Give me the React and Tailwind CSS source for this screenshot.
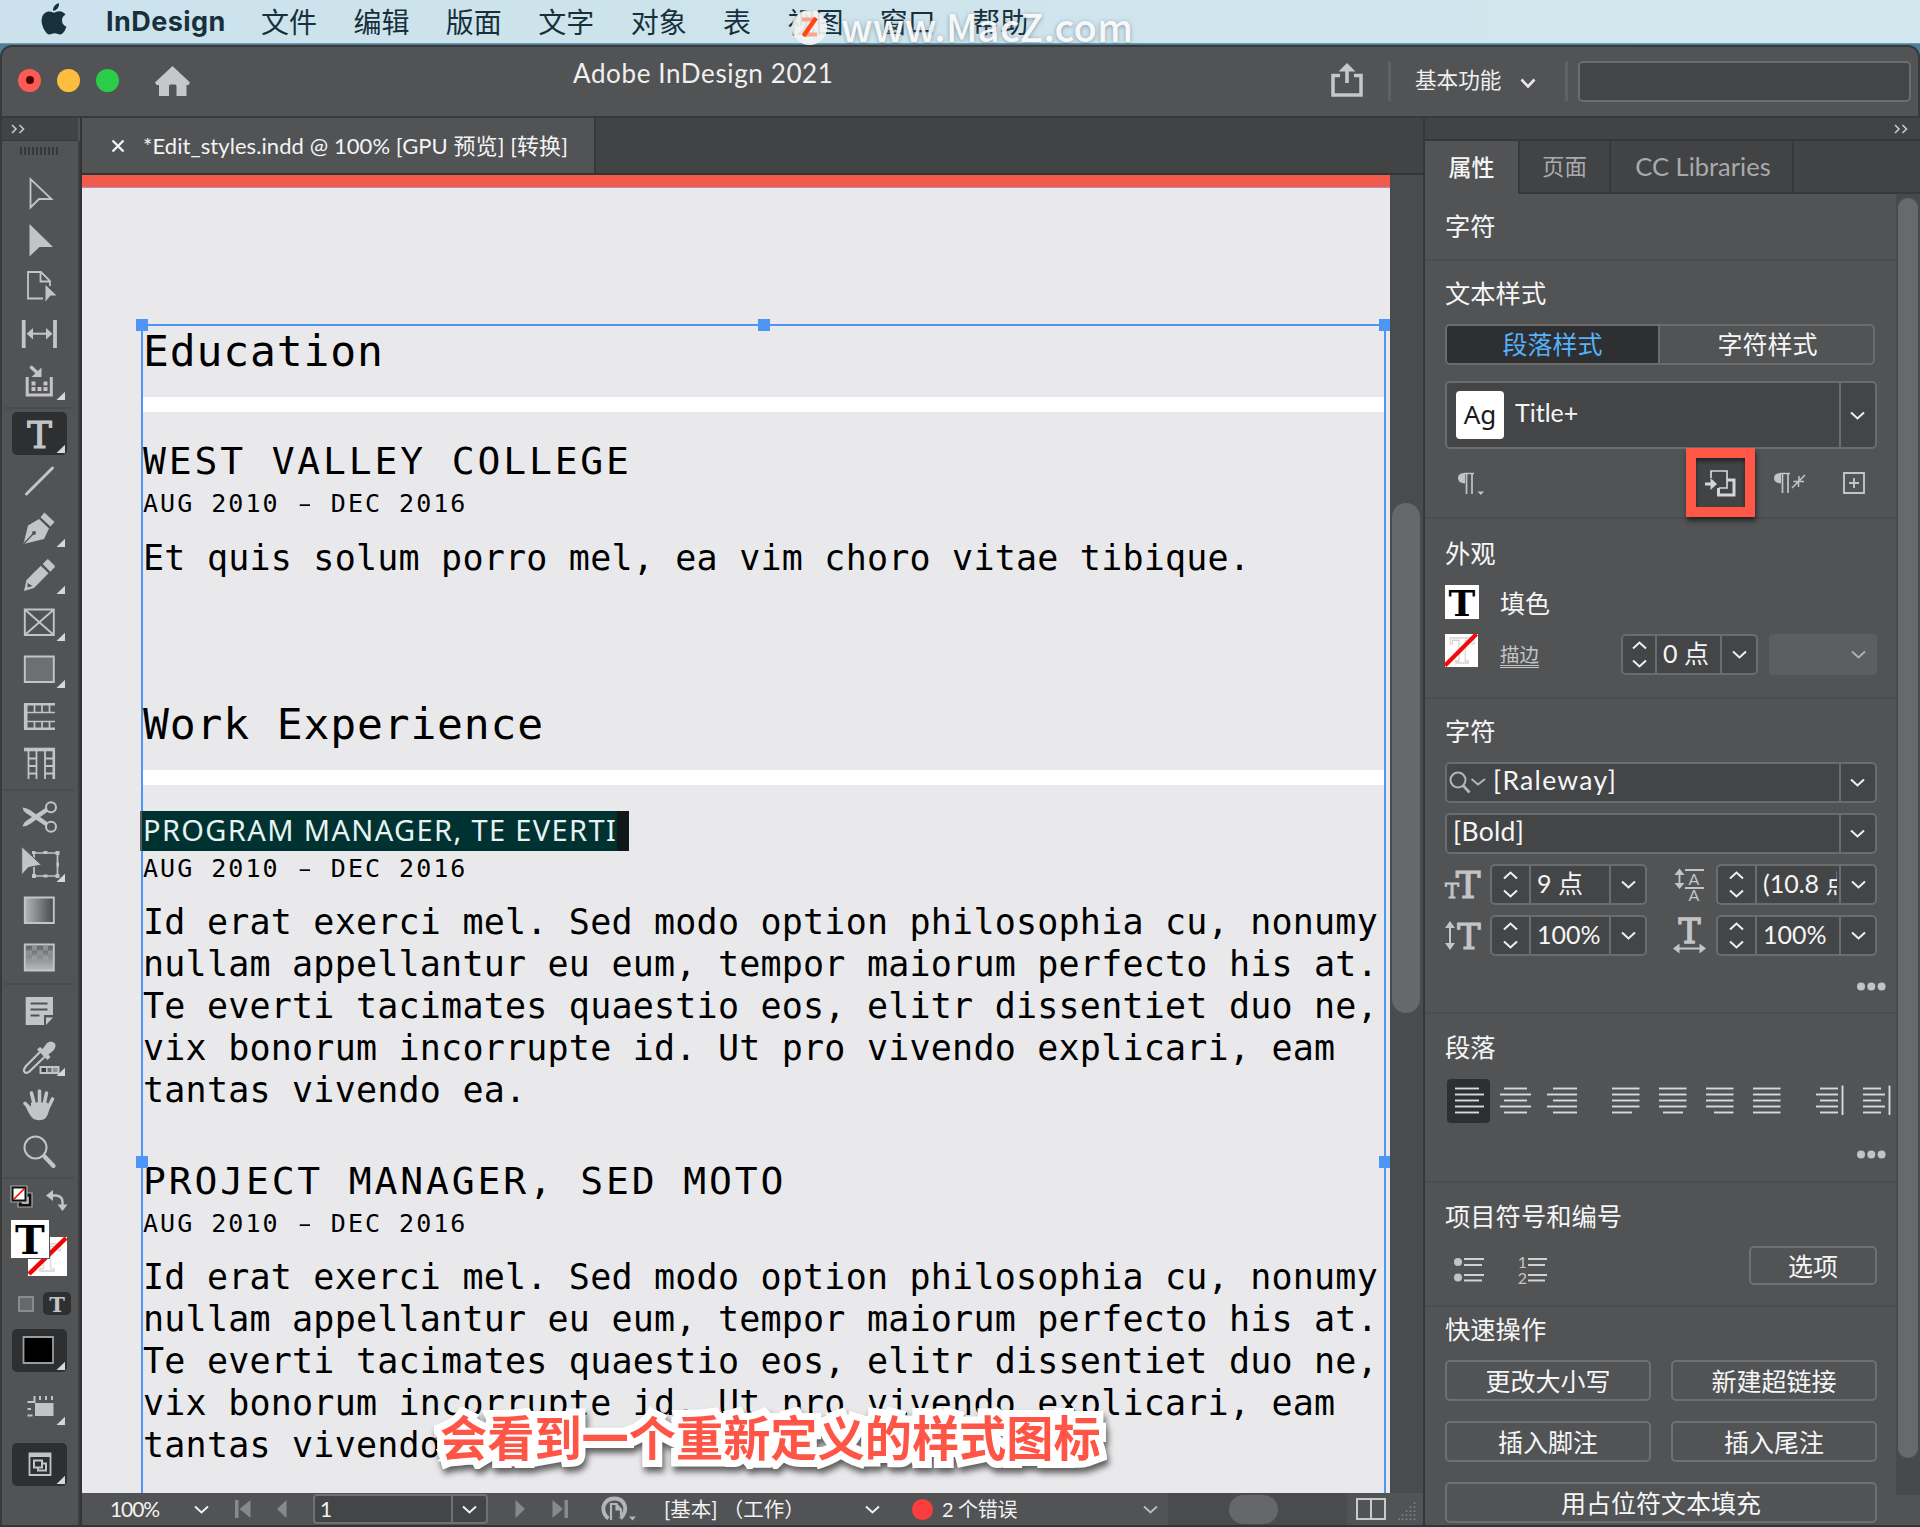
import React from 'react';

const ICON = '#c3c4c6';

const MENUS = ['文件', '编辑', '版面', '文字', '对象', '表', '视图', '窗口', '帮助'];

const BODY_LINES = [
  'Id erat exerci mel. Sed modo option philosophia cu, nonumy',
  'nullam appellantur eu eum, tempor maiorum perfecto his at.',
  'Te everti tacimates quaestio eos, elitr dissentiet duo ne,',
  'vix bonorum incorrupte id. Ut pro vivendo explicari, eam',
  'tantas vivendo ea.',
];

/* ---------- small shared pieces ---------- */

const Chevron = ({ up = false, color = '#f0f0f0', width = 15 }) => (
  <svg width={width} height="9" viewBox="0 0 15 9" fill="none" stroke={color} strokeWidth="2">
    <path d={up ? 'M1 7.5L7.5 1.5L14 7.5' : 'M1 1.5L7.5 7.5L14 1.5'} />
  </svg>
);

const DoubleChevron = () => (
  <svg width="14" height="10" viewBox="0 0 14 10" fill="none" stroke="#c9c9c9" strokeWidth="1.6">
    <path d="M1 1L5 5L1 9M8.500 1L12.500 5L8.500 9" />
  </svg>
);

const SlabT = ({ x, y, size, fill = ICON, bold = true, ...rest }) => (
  <text
    x={x}
    y={y}
    fontSize={size}
    fill={fill}
    fontWeight={bold ? 700 : 400}
    fontFamily='"DejaVu Serif", serif'
    textAnchor="middle"
    {...rest}
  >
    T
  </text>
);

const Dots = () => (
  <svg width="29" height="9" viewBox="0 0 29 9" fill={ICON}>
    <circle cx="4" cy="4.500" r="4" />
    <circle cx="14.300" cy="4.500" r="4" />
    <circle cx="24.600" cy="4.500" r="4" />
  </svg>
);

/* ---------- toolbar ---------- */

const Tool = ({ active, corner, children }) => (
  <div className="relative h-[47px] w-[55px]">
    {active && <div className="absolute inset-x-0 top-px h-[43px] rounded-[5px] bg-[#2e2f31]" />}
    <svg className="absolute inset-0 overflow-visible" width="55" height="47" viewBox="0 0 55 47" fill="none" stroke={ICON}>
      {children}
      {corner && <path d="M44.500 42H53V33.700Z" fill="#d6d7d8" stroke="none" />}
    </svg>
  </div>
);

const ToolRule = () => <div className="my-[2px] h-[2px] w-[70px] bg-[#4a4b4d]" />;

const Toolbar = () => (
  <div className="flex w-[80px] flex-col border-l-2 border-[#38393b] bg-[#525355]">
    <div className="flex h-[23px] w-[76px] items-center border-b border-[#36373a] bg-[#424344] pl-[9px]">
      <DoubleChevron />
    </div>
    <div className="flex flex-1 flex-col items-center border-r-2 border-[#3d3e40] pr-[2px]">
      <div className="mt-[6px] flex h-[8px] gap-[2px]">
        {Array.from({ length: 10 }).map((_, i) => (
          <span key={i} className="w-[2px] bg-[#37383a]" />
        ))}
      </div>

      <div className="mt-[15px]">
        <Tool>
          <path d="M18.500 9V37.500L27 29H39.500Z" strokeWidth="1.800" />
        </Tool>
        <Tool>
          <path d="M17.500 7V39.500L27.500 30H41Z" fill={ICON} stroke="none" />
        </Tool>
        <Tool>
          <path d="M31 34.500H16V8H29L38 17V22M28.500 8V17.500H38" strokeWidth="1.800" />
          <path d="M33.500 21V37.500L38.500 31.500H44.500Z" fill={ICON} stroke="none" />
        </Tool>
        <Tool>
          <path d="M11.700 9V37M43 9V37" strokeWidth="3.800" />
          <path d="M18 22.700H37" strokeWidth="2" />
          <path d="M14.700 22.700L21 17V28.500ZM40.500 22.700L34 17V28.500Z" fill={ICON} stroke="none" />
        </Tool>
        <Tool corner>
          <path d="M15.200 19V37H39.300V19" strokeWidth="3" />
          <path d="M18.500 8.500L26 15.500" strokeWidth="3.500" />
          <path d="M29.500 9.500V19H19.500Z" fill={ICON} stroke="none" />
          <path d="M19.500 31H23.500M25.500 31H29.500M31.500 31H35.500M19.500 25.500H23.500M31.500 25.500H35.500" strokeWidth="4" />
        </Tool>
      </div>
      <ToolRule />
      <div>
        <Tool active corner>
          <SlabT x="27.500" y="36.500" size="37" bold={false} stroke={ICON} strokeWidth="1.200" />
        </Tool>
        <Tool>
          <path d="M14.500 36L40.500 10" strokeWidth="3" strokeLinecap="round" />
        </Tool>
        <Tool corner>
          <path d="M11.500 39L16 20.500L27 14L37 23.500L32 34Z" fill={ICON} stroke="none" strokeLinejoin="round" />
          <path d="M12 38.500L21 29" stroke="#525355" strokeWidth="1.300" />
          <circle cx="22" cy="28" r="2" fill="#525355" stroke="none" />
          <path d="M32.300 7.500L42.500 17L38.500 21.500L28.500 12.200Z" fill={ICON} stroke="none" />
        </Tool>
        <Tool corner>
          <path d="M12 39L14.500 28L28.800 13.800L36.500 21.300L22 36Z" fill={ICON} stroke="none" />
          <path d="M15.500 31L20.500 34L15.500 35.500Z" fill="#525355" stroke="none" />
          <path d="M30.700 12L35 7.500Q36 7 37 8L42.500 13.500Q43 14.500 42.500 15.500L38.300 19.700Z" fill={ICON} stroke="none" />
        </Tool>
        <Tool corner>
          <path d="M12.800 10.500H41.800V36H12.800ZM12.800 10.500L41.800 36M41.800 10.500L12.800 36" strokeWidth="1.900" />
        </Tool>
        <Tool corner>
          <path d="M12.800 10.500H41.800V36H12.800Z" fill="#6e6f71" strokeWidth="1.900" />
        </Tool>
        <Tool>
          <path d="M13.700 10V37" strokeWidth="3.600" />
          <path d="M12 11.200H43M12 35.700H43" strokeWidth="2.600" />
          <path d="M14 19.500H43M14 28.500H43M22.500 11V19.500M30 11V19.500M37.500 11V19.500M22.500 28.500V36M30 28.500V36M37.500 28.500V36" strokeWidth="1.700" />
        </Tool>
        <Tool>
          <path d="M12 9.500H43" strokeWidth="3.600" />
          <path d="M41.800 9V39" strokeWidth="2.600" />
          <path d="M16.500 10V39M24.500 10V39M33 10V39M16.500 18.500H24.500M16.500 26H24.500M16.500 33.500H24.500M33 18.500H42M33 26H42M33 33.500H42" strokeWidth="1.800" />
        </Tool>
      </div>
      <ToolRule />
      <div>
        <Tool>
          <circle cx="39" cy="14.200" r="5" strokeWidth="2" />
          <circle cx="39" cy="33.800" r="5" strokeWidth="2" />
          <path d="M10.500 14.500Q14 14.500 18 17L36 29.500L33.500 33L14 20Q11 18 10.500 14.500Z" fill={ICON} stroke="none" />
          <path d="M10.500 33.500Q14 33.500 18 31L36 18.500L33.500 15L14 28Q11 30 10.500 33.500Z" fill={ICON} stroke="none" />
        </Tool>
        <Tool corner>
          <path d="M22 13H45.500V36H22Z" strokeWidth="1.700" />
          <path d="M9.700 6.500V35L16.500 27.500L29.500 25Z" fill={ICON} stroke="#525355" strokeWidth="1" />
          <path d="M20 34H24V38H20ZM43.500 34H47.500V38H43.500ZM43.500 11H47.500V15H43.500ZM20 11H23.500V14H20ZM31.500 11H35.500V14H31.500ZM31.500 34.500H35.500V37.500H31.500ZM44.500 22.500H47V26.500H44.500Z" fill={ICON} stroke="none" />
        </Tool>
        <Tool>
          <defs>
            <linearGradient id="grad-swatch">
              <stop offset="0" stopColor="#b5b6b8" />
              <stop offset="1" stopColor="#47484a" />
            </linearGradient>
          </defs>
          <path d="M12.800 10.500H41.800V36H12.800Z" fill="url(#grad-swatch)" strokeWidth="1.900" />
        </Tool>
        <Tool>
          <defs>
            <linearGradient id="grad-feather" x1="0" y1="0" x2="0" y2="1">
              <stop offset="0" stopColor="#5f6062" />
              <stop offset="1" stopColor="#b9babc" />
            </linearGradient>
          </defs>
          <path d="M12.800 10.500H41.800V36.500H12.800Z" fill="url(#grad-feather)" strokeWidth="1.900" />
          <path d="M20 14H25M31 14H36M14 19H20M25 19H31M36 19H41" stroke="#8f9092" strokeWidth="5" />
          <path d="M20 24H25M31 24H36" stroke="#9b9c9e" strokeWidth="5" />
        </Tool>
      </div>
      <ToolRule />
      <div>
        <Tool>
          <path d="M13.700 10H41V28H32V38H13.700Z" fill={ICON} stroke="none" />
          <path d="M34 38V30.500H41Z" fill={ICON} stroke="none" />
          <path d="M18.500 16.500H35.500M18.500 22.500H35.500M18.500 28.500H27.500" stroke="#525355" strokeWidth="2" />
        </Tool>
        <Tool corner>
          <path d="M28 18L14 32Q10.500 36.500 13 38.500Q15.500 40 18.500 36.500L33 22.500" strokeWidth="2.200" />
          <path d="M25 15.500L28 13L30.500 15L35 9Q39 6 42.500 9Q45 12 41.500 16.500L36.500 20.500L38.500 23L35.500 26Z" fill={ICON} stroke="none" />
          <path d="M26 30.500H48.500V41H26Z" fill="#525355" stroke="none" />
          <path d="M27.500 32H47.500V40H27.500Z" fill={ICON} stroke="none" />
          <path d="M29.500 34H34V38H29.500Z" fill="#3c3d3f" stroke="none" />
          <path d="M35.500 34H39.500V38H35.500Z" fill="#6b6c6e" stroke="none" />
          <path d="M41 34H45.500V38H41Z" fill="#929395" stroke="none" />
        </Tool>
        <Tool>
          <path d="M19.500 12L22.500 24M27.500 10V24M34.500 12L32 24M40.500 18L36 27M13 22.500L20 29" strokeWidth="3.600" strokeLinecap="round" />
          <path d="M19 21.500H35L38 25Q36 37 31.500 38.500Q26 40 21.500 38Q17 34 13.500 25L19 28Z" fill={ICON} stroke="none" />
        </Tool>
        <Tool>
          <circle cx="23.500" cy="19.500" r="11" strokeWidth="2" />
          <path d="M32.500 28.500L41.500 38" strokeWidth="4.300" strokeLinecap="round" />
        </Tool>
      </div>
      <ToolRule />

      {/* default colours / swap */}
      <div className="mt-[2px] flex w-[60px] items-center justify-between">
        <svg className="ml-px" width="24" height="24" viewBox="0 0 24 24" fill="none">
          <path d="M8 8H22V22H8Z" fill="#111" stroke="#a6a7a9" strokeWidth="1.200" />
          <path d="M12.500 12.500H18V18H12.500Z" fill="#666" stroke="#e0e0e0" strokeWidth="1.400" />
          <path d="M1 1H17V17H1Z" fill="#111" stroke="#a6a7a9" strokeWidth="1.200" />
          <path d="M3.500 3.500H14.500V14.500H3.500Z" fill="#fff" />
          <path d="M3.500 14.500L14.500 3.500" stroke="#f00" strokeWidth="1.600" />
        </svg>
        <svg className="mr-px mt-[6px]" width="22" height="22" viewBox="0 0 22 22" fill="none" stroke={ICON}>
          <path d="M5 6.500H10Q16.500 7 16.500 13V17" strokeWidth="2.400" />
          <path d="M0 6.500L7 1V12ZM16.500 22L11.500 15.500H21.500Z" fill={ICON} stroke="none" />
        </svg>
      </div>
      {/* fill and stroke proxies */}
      <svg className="mt-[8px] overflow-visible" width="58" height="58" viewBox="0 0 58 58">
        <path d="M18 18H57V57H18Z" fill="#fff" />
        <SlabT x="37" y="52" size="38" fill="none" stroke="#c9c9c9" strokeWidth="0.800" />
        <path d="M19 55L56 19" stroke="#f00505" strokeWidth="4.500" />
        <path d="M0.500 0.500H39.500V39.500H0.500Z" fill="#fff" stroke="#555" />
        <SlabT x="20" y="35" size="40" fill="#000" />
      </svg>
      <div className="ml-[10px] mt-[15px] flex items-center gap-[9px]">
        <span className="h-4 w-4 border-2 border-[#8a8b8d] bg-[#67686a]" />
        <span className="flex h-[23px] w-7 items-center justify-center rounded-[5px] bg-[#2e2f31]">
          <svg className="overflow-visible" width="20" height="20" viewBox="0 0 20 20">
            <SlabT x="10" y="17.500" size="21" />
          </svg>
        </span>
      </div>
      <div className="mt-[13px]">
        <Tool active corner>
          <path d="M11.500 9H41V35H11.500Z" fill="#000" stroke="#9b9c9e" strokeWidth="1.800" />
        </Tool>
      </div>
      <div className="mt-[8px]">
        <Tool corner>
          <path d="M23 20H41.500V33H23Z" fill={ICON} stroke="none" />
          <path d="M22.500 13V19H15.500M28 13V17M34 13V17M40 13V17M15.500 26H19M15.500 32.500H20.500" strokeWidth="2" />
        </Tool>
      </div>
      <div className="mt-[12px]">
        <Tool active corner>
          <path d="M17.500 11.500H38.500V33H17.500Z" strokeWidth="1.800" />
          <path d="M17.500 13.500H38.500" strokeWidth="3" />
          <path d="M22 18.500H30V25.500H22ZM26 25V28.500H34V21.500H30" strokeWidth="2" />
        </Tool>
      </div>
    </div>
  </div>
);

/* ---------- document ---------- */

const Handle = ({ className }) => <span className={`absolute h-[12px] w-[12px] bg-[#4d95f7] ${className}`} />;

const Heading = ({ className = '', children }) => (
  <h2 className={`h-[50px] text-[43px] leading-[50px] tracking-[0.850px] ${className}`}>{children}</h2>
);

const JobTitle = ({ className = '', children }) => (
  <h3 className={`h-[44px] text-[38px] leading-[44px] tracking-[2.850px] ${className}`}>{children}</h3>
);

const Dates = ({ className = '' }) => (
  <p className={`h-[30px] text-[25px] leading-[30px] tracking-[2.020px] ${className}`}>
    AUG 2010 <span className="inline-block scale-x-[0.680]">–</span> DEC 2016
  </p>
);

const Rule = () => <div className="mt-[21px] h-[15px] bg-white" />;

const Body = ({ className = '', lines }) => (
  <div className={`text-[35px] leading-[42.100px] tracking-[0.220px] ${className}`}>
    {lines.map((line) => (
      <p key={line}>{line}</p>
    ))}
  </div>
);

const StatusBar = () => (
  <div className="flex h-[32px] items-center bg-[#525355] text-[21px] text-[#f2f2f2]">
    <span className="ml-[28px] w-[84px] text-[21px] tracking-[-1.100px]">100%</span>
    <Chevron />
    <svg className="ml-[26px]" width="16" height="18" viewBox="0 0 16 18" fill="#88898b">
      <path d="M0 0H3.500V18H0ZM15.500 0V18L4.500 9Z" />
    </svg>
    <svg className="ml-[26px]" width="10" height="18" viewBox="0 0 10 18" fill="#88898b">
      <path d="M9.500 0V18L0 9Z" />
    </svg>
    <div className="ml-[26px] flex h-[30px] w-[175px] items-center rounded-[4px] border-2 border-[#707173] bg-[#444547]">
      <span className="flex-1 pl-[5px]">1</span>
      <span className="flex h-full w-[35px] items-center justify-center border-l-2 border-[#707173]">
        <Chevron />
      </span>
    </div>
    <svg className="ml-[27px]" width="10" height="18" viewBox="0 0 10 18" fill="#88898b">
      <path d="M0.500 0V18L10 9Z" />
    </svg>
    <svg className="ml-[27px]" width="16" height="18" viewBox="0 0 16 18" fill="#88898b">
      <path d="M0.500 0V18L11 9ZM12.500 0H16V18H12.500Z" />
    </svg>
    <svg className="ml-[33px]" width="36" height="26" viewBox="0 0 36 26" fill="none">
      <path d="M7.500 22.500Q1.500 18 2.500 10.500Q5 2.500 13.500 2.500Q22 2.500 24 10.500Q25 17 19.500 22.500" stroke="#b4b5b7" strokeWidth="3.800" />
      <path d="M10 24V8H15.500V13.500H20V19.500" stroke="#b4b5b7" strokeWidth="2.200" />
      <path d="M16 7.500L21 13H16Z" fill="#b4b5b7" />
      <path d="M28 20.500H35L31.500 24.500Z" fill="#b4b5b7" />
    </svg>
    <span className="ml-[27px] w-[201px] whitespace-nowrap text-[20.500px]">[基本] （工作）</span>
    <Chevron />
    <span className="ml-[32px] h-[21px] w-[21px] rounded-full bg-[#fb3d3d]" />
    <span className="ml-[9px] w-[201px] text-[20px] tracking-[-0.300px]">2 个错误</span>
    <Chevron color="#b9babc" />
    <div className="ml-[10px] flex h-full w-[179px] items-center bg-[#4a4b4d]">
      <span className="ml-[61px] h-[29px] w-[49px] rounded-full bg-[#666769]" />
    </div>
    <svg className="ml-[9px]" width="30" height="22" viewBox="0 0 30 22" fill="none" stroke="#c9cacc" strokeWidth="2">
      <path d="M1 1H29V21H1ZM15 1V21" />
    </svg>
    <svg className="ml-[12px] mt-[4px]" width="18" height="20" viewBox="0 0 18 20" stroke="#88898b" strokeWidth="1.500" strokeDasharray="1.500 2.500">
      <path d="M16.500 19V1M12.500 19V5M8.500 19V9M4.500 19V13M1 19V16" />
    </svg>
  </div>
);

const Document = () => (
  <div className="flex w-[1343px] flex-col border-l-2 border-[#333436]">
    <div className="flex h-[57px] border-b-2 border-[#333436] bg-[#424344]">
      <div className="flex w-[514px] items-center border-r-2 border-[#38393b] bg-[#525355] pl-[29px] text-[#f4f4f4]">
        <svg width="14" height="14" viewBox="0 0 14 14" stroke="#f4f4f4" strokeWidth="2.400">
          <path d="M1.500 1.500L12.500 12.500M12.500 1.500L1.500 12.500" />
        </svg>
        <span className="-mt-px ml-[18px] whitespace-nowrap text-[22px] tracking-[0.080px]">
          *Edit_styles.indd @ 100% [GPU 预览] [转换]
        </span>
      </div>
    </div>

    <div className="flex h-[1318px]">
      <div className="relative w-[1308px] overflow-hidden bg-[#e9e9eb]">
        <div className="h-[13px] border-b border-[#b58ac8] bg-[#f15b4c]" />
        {/* text frame */}
        <div className="relative ml-[59px] mt-[136px] h-[1400px] w-[1245px] border-2 border-[#4d95f7] font-['DejaVu_Sans_Mono',monospace] whitespace-pre text-black">
          <Handle className="-left-[7px] -top-[7px]" />
          <Handle className="left-[615px] -top-[7px]" />
          <Handle className="-right-[7px] -top-[7px]" />
          <Handle className="-left-[7px] top-[830px]" />
          <Handle className="-right-[7px] top-[830px]" />

          <Heading>Education</Heading>
          <Rule />
          <JobTitle className="mt-[27px]">WEST VALLEY COLLEGE</JobTitle>
          <Dates className="mt-[6px]" />
          <Body className="mt-[18px]" lines={['Et quis solum porro mel, ea vim choro vitae tibique.']} />

          <Heading className="mt-[120px]">Work Experience</Heading>
          <Rule />
          <div className="-ml-[3px] mt-[26px] flex h-[40px] w-[489px] items-center border-l-2 border-[#5a5a5a] bg-gradient-to-r from-[#003231] from-[97.500%] to-[#101818] to-[97.500%] pl-px pb-[3px] font-['Noto_Sans',sans-serif] text-[29px] tracking-[1.370px] text-[#e8f4f2]">
            PROGRAM MANAGER, TE EVERTI
          </div>
          <Dates className="mt-[3px]" />
          <Body className="mt-[17px]" lines={BODY_LINES} />

          <JobTitle className="mt-[47px]">PROJECT MANAGER, SED MOTO</JobTitle>
          <Dates className="mt-[6px]" />
          <Body className="mt-[17px]" lines={BODY_LINES} />
        </div>
      </div>
      <div className="w-[33px] bg-[#4a4b4d]">
        <div className="ml-[2px] mt-[328px] h-[510px] w-[28px] rounded-full bg-[#67686a]" />
      </div>
    </div>
    <StatusBar />
  </div>
);

/* ---------- properties panel ---------- */

const SectionTitle = ({ children }) => (
  <h4 className="h-[30px] text-[25.300px] leading-[30px] text-[#f6f6f6]">{children}</h4>
);

const Section = ({ className, children }) => (
  <section className={`border-b-2 border-[#4b4c4e] pl-[20px] ${className}`}>{children}</section>
);

const Select = ({ className = '', children }) => (
  <div className={`flex w-[432px] items-center rounded-[5px] border-2 border-[#6b6c6e] bg-[#444547] ${className}`}>
    <div className="flex min-w-0 flex-1 items-center">{children}</div>
    <div className="flex h-full w-[36px] items-center justify-center border-l-2 border-[#6b6c6e] pr-px">
      <Chevron />
    </div>
  </div>
);

const Stepper = ({ value, width, stepWidth, arrowWidth }) => (
  <div
    className="flex h-[41px] items-center rounded-[5px] border-2 border-[#6b6c6e] bg-[#444547]"
    style={{ width }}
  >
    <div className="flex h-full flex-col items-center justify-between py-[5px]" style={{ width: stepWidth }}>
      <Chevron up />
      <Chevron />
    </div>
    <div className="flex h-full min-w-0 flex-1 items-center overflow-hidden whitespace-nowrap border-x-2 border-[#6b6c6e] pb-px pl-[6px] pr-[2px] text-[25px] text-[#f6f6f6]">
      <span className="overflow-hidden">{value}</span>
    </div>
    <div className="flex h-full items-center justify-center" style={{ width: arrowWidth }}>
      <Chevron />
    </div>
  </div>
);

const Button = ({ className = '', children }) => (
  <button className={`h-[41px] rounded-[5px] border-2 border-[#6f7072] text-[25px] leading-[36px] text-[#f6f6f6] ${className}`}>
    {children}
  </button>
);

// each entry: [x1, x2] of the five lines, inside a 43px wide cell
const ALIGNS = [
  { id: 'left', rows: [[8, 32], [8, 37], [8, 32], [8, 37], [8, 32]], active: true },
  { id: 'center', rows: [[10, 33], [6, 37], [10, 33], [6, 37], [10, 33]] },
  { id: 'right', rows: [[12, 36], [6, 36], [12, 36], [6, 36], [12, 36]] },
  { id: 'justify-left', rows: [[7, 34.500], [7, 34.500], [7, 34.500], [7, 34.500], [7, 27]], gap: true },
  { id: 'justify-center', rows: [[7, 34.500], [7, 34.500], [7, 34.500], [7, 34.500], [11, 31]] },
  { id: 'justify-right', rows: [[7, 34.500], [7, 34.500], [7, 34.500], [7, 34.500], [15, 34.500]] },
  { id: 'justify-all', rows: [[7, 34.500], [7, 34.500], [7, 34.500], [7, 34.500], [7, 34.500]] },
  { id: 'to-spine', rows: [[11, 29], [7, 29], [11, 29], [7, 29], [11, 29]], bar: true, gap: true },
  { id: 'from-spine', rows: [[7, 25], [7, 29], [7, 25], [7, 29], [7, 25]], bar: true },
];

const AlignButton = ({ rows, active, bar, gap }) => (
  <div className={`h-[44px] w-[43px] shrink-0 rounded-[4px] ${active ? 'bg-[#2e2f31]' : ''} ${gap ? 'ml-[16.500px]' : ''}`}>
    <svg width="43" height="44" viewBox="0 0 43 44" stroke="#d8d9da" strokeWidth="1.900">
      {rows.map(([x1, x2], i) => (
        <path key={i} d={`M${x1} ${9.500 + i * 6}H${x2}`} />
      ))}
      {bar && <path d="M33.500 6.500V36" />}
    </svg>
  </div>
);

const PanelTab = ({ className = '', children }) => (
  <div className={`flex items-center justify-center border-b-2 border-r-2 border-[#37383a] text-[22.500px] text-[#a9aaac] ${className}`}>
    {children}
  </div>
);

const Properties = () => (
  <div className="flex w-[497px] flex-col border-l-2 border-[#36373a] bg-[#525355]">
    <div className="flex h-[23px] items-center justify-end border-b-2 border-[#36373a] bg-[#424344] pr-[12px]">
      <DoubleChevron />
    </div>
    <div className="flex h-[53px] bg-[#424344]">
      <div className="flex w-[93px] items-center justify-center bg-[#525355] text-[23px] font-medium text-[#f6f6f6]">属性</div>
      <PanelTab className="w-[93px] border-l-2 pt-px">页面</PanelTab>
      <PanelTab className="w-[183px] pl-[3px] text-[25.500px]">CC Libraries</PanelTab>
      <div className="flex-1 border-b-2 border-[#37383a]" />
    </div>

    <div className="flex flex-1">
      <div className="w-[471px] overflow-hidden">
        <Section className="h-[67px] pt-[17px]">
          <SectionTitle>字符</SectionTitle>
        </Section>

        <Section className="h-[258px] pt-[17px]">
          <SectionTitle>文本样式</SectionTitle>
          <div className="mt-[16px] flex h-[41px] w-[430px] overflow-hidden rounded-[5px] border-2 border-[#6b6c6e] text-center text-[25px] leading-[37px]">
            <div className="w-[213px] border-r-2 border-[#6b6c6e] bg-[#2e2f31] text-[#55b1f8]">段落样式</div>
            <div className="flex-1 pl-[2px] text-[#f6f6f6]">字符样式</div>
          </div>
          <Select className="mt-[16px] h-[68px]">
            <span className="ml-[9px] flex h-[48px] w-[48px] items-center justify-center rounded-[4px] bg-white pb-[2px] font-['Noto_Sans',sans-serif] text-[26px] text-[#1a1a1a]">
              Ag
            </span>
            <span className="ml-[11px] pb-[4px] text-[25px] text-[#f6f6f6]">Title+</span>
          </Select>
          <div className="flex h-[68px] items-center">
            <svg className="ml-[12px] mt-[1px]" width="28" height="26" viewBox="0 0 28 26">
              <path d="M8 12.500Q1 12 1 7Q1 2 8 2Z" fill={ICON} />
              <path d="M7 2.500H17M9.500 2V23M15 2V23" stroke={ICON} strokeWidth="1.700" />
              <path d="M20.500 20.500H27L23.800 24Z" fill={ICON} />
            </svg>
            <div className="relative ml-[201px] -mt-[1px] h-[69px] w-[69px] border-[10px] border-[#fe5747] bg-[#424345] shadow-[1px_4px_5px_rgba(0,0,0,0.55),inset_0_3px_4px_rgba(0,0,0,0.5)]">
              <svg className="ml-[7px] mt-[11px]" width="34" height="28" viewBox="0 0 34 28" fill="none" stroke="#d4d5d6">
                <path d="M8 9V2H24V19H16" strokeWidth="1.700" />
                <path d="M24 11H31V26H15.500V19" strokeWidth="3" />
                <path d="M2 15H9" strokeWidth="3" />
                <path d="M7.500 9V21L14 15Z" fill="#d4d5d6" stroke="none" />
              </svg>
            </div>
            <svg className="ml-[18px] mt-[1px]" width="34" height="26" viewBox="0 0 34 26">
              <path d="M8 12.500Q1 12 1 7Q1 2 8 2Z" fill={ICON} />
              <path d="M7 2.500H17M9.500 2V22M15 2V22" stroke={ICON} strokeWidth="1.700" />
              <path d="M19 17L32 4M20.500 10.500H25.500V16M31 10.500H26V5" stroke={ICON} strokeWidth="1.500" fill="none" />
            </svg>
            <svg className="ml-[36px]" width="22" height="22" viewBox="0 0 22 22" fill="none" stroke={ICON} strokeWidth="1.900">
              <path d="M1 1H21V21H1ZM11 6V16M6 11H16" />
            </svg>
          </div>
        </Section>

        <Section className="h-[180px] pt-[19px]">
          <SectionTitle>外观</SectionTitle>
          <div className="mt-[17px] flex h-[34px] items-center">
            <svg className="overflow-visible" width="34" height="34" viewBox="0 0 34 34">
              <path d="M0 0H34V34H0Z" fill="#fff" />
              <SlabT x="17" y="31" size="36" fill="#000" />
            </svg>
            <span className="ml-[21px] mt-[4px] text-[25px] text-[#f6f6f6]">填色</span>
          </div>
          <div className="mt-[15px] flex h-[41px]">
            <svg className="overflow-visible" width="33" height="33" viewBox="0 0 33 33">
              <path d="M0 0H33V33H0Z" fill="#fff" />
              <SlabT x="17" y="29" size="33" fill="none" stroke="#c9c9c9" strokeWidth="0.800" />
              <path d="M0 31.500L31.500 0" stroke="#f00a0a" strokeWidth="4" />
            </svg>
            <span className="ml-[22px] mt-[7px] h-[27px] border-b-[3px] border-double border-[#c3c4c6] text-[19.500px] leading-[28px] text-[#c3c4c6]">
              描边
            </span>
            <span className="w-[82px]" />
            <Stepper value="0 点" width={137} stepWidth={32} arrowWidth={34} />
            <div className="ml-[11px] flex w-[108px] items-center justify-end rounded-[4px] bg-[#5d5e60] pr-[11px]">
              <Chevron color="#aeafb1" />
            </div>
          </div>
        </Section>

        <Section className="h-[315px] pt-[17px]">
          <SectionTitle>字符</SectionTitle>
          <Select className="mt-[16px] h-[41px]">
            <svg className="ml-px mt-[1px]" width="38" height="24" viewBox="0 0 38 24" fill="none" stroke="#b4b5b7">
              <circle cx="10" cy="9" r="7.500" strokeWidth="2" />
              <path d="M15 14.500L21.500 21.500" strokeWidth="2.800" />
              <path d="M23.500 8L30 13.500L37 8" strokeWidth="1.900" />
            </svg>
            <span className="ml-[7px] pb-[3px] text-[26.500px] tracking-[1.300px] text-[#f6f6f6]">[Raleway]</span>
          </Select>
          <Select className="mt-[10px] h-[41px]">
            <span className="ml-[6px] pb-[3px] text-[26.500px] tracking-[0.300px] text-[#f6f6f6]">[Bold]</span>
          </Select>
          <div className="mt-[10px] flex items-center">
            <svg className="overflow-visible" width="36" height="32" viewBox="0 0 36 32">
              <SlabT x="23" y="29" size="37" bold={false} stroke={ICON} strokeWidth="1.200" />
              <SlabT x="7" y="29" size="21" bold={false} stroke={ICON} strokeWidth="0.800" />
            </svg>
            <span className="w-[9px]" />
            <Stepper value="9 点" width={157} stepWidth={37} arrowWidth={34} />
            <svg className="ml-[27px] overflow-visible" width="30" height="34" viewBox="0 0 30 34" fill="none" stroke={ICON}>
              <path d="M5.500 5V17M11 2H30M11 20H30" strokeWidth="1.800" />
              <path d="M0.500 7L5.500 0.500L10.500 7ZM0.500 15L5.500 21L10.500 15Z" fill={ICON} stroke="none" />
              <g fill={ICON} stroke="none" fontSize="16" fontFamily="Lato, sans-serif" textAnchor="middle">
                <text x="20" y="16.500">A</text>
                <text x="20" y="33">A</text>
              </g>
            </svg>
            <span className="w-[12px]" />
            <Stepper value="(10.8 点" width={161} stepWidth={37} arrowWidth={34} />
          </div>
          <div className="mt-[10px] flex items-center">
            <svg className="overflow-visible" width="36" height="32" viewBox="0 0 36 32" fill="none" stroke={ICON}>
              <SlabT x="24" y="29" size="35" bold={false} strokeWidth="1.200" />
              <path d="M5 6V25" strokeWidth="2" />
              <path d="M0 8L5 1L10 8ZM0 23L5 30L10 23Z" fill={ICON} stroke="none" />
            </svg>
            <span className="w-[9px]" />
            <Stepper value="100%" width={157} stepWidth={37} arrowWidth={34} />
            <svg className="ml-[26px] overflow-visible" width="33" height="36" viewBox="0 0 33 36" fill="none" stroke={ICON}>
              <SlabT x="16.500" y="25" size="33" bold={false} strokeWidth="1.400" />
              <path d="M6 30.500H27" strokeWidth="2" />
              <path d="M6.500 25.500L0 30.500L6.500 35.500ZM26.500 25.500L33 30.500L26.500 35.500Z" fill={ICON} stroke="none" />
            </svg>
            <span className="w-[10px]" />
            <Stepper value="100%" width={161} stepWidth={37} arrowWidth={34} />
          </div>
          <div className="mt-[26px] flex justify-end pr-[10px]">
            <Dots />
          </div>
        </Section>

        <Section className="h-[169px] pt-[18px]">
          <SectionTitle>段落</SectionTitle>
          <div className="ml-[2px] mt-[17px] flex gap-[4px]">
            {ALIGNS.map(({ id, ...align }) => (
              <AlignButton key={id} {...align} />
            ))}
          </div>
          <div className="mt-[27px] flex justify-end pr-[10px]">
            <Dots />
          </div>
        </Section>

        <Section className="h-[124px] pt-[18px]">
          <SectionTitle>项目符号和编号</SectionTitle>
          <div className="mt-[15px] flex h-[39px] items-center">
            <svg className="ml-[9px] mt-[8px]" width="31" height="28" viewBox="0 0 31 28" stroke="#d0d1d2" strokeWidth="1.800">
              <path d="M10 3H30M10 9H28M10 19H30M10 24.500H28" />
              <circle cx="4" cy="6" r="4" fill={ICON} stroke="none" />
              <circle cx="4" cy="21.500" r="4" fill={ICON} stroke="none" />
            </svg>
            <svg className="ml-[33px] mt-[8px] overflow-visible" width="31" height="30" viewBox="0 0 31 30" stroke="#d0d1d2" strokeWidth="1.800">
              <path d="M10 4H29M10 10H27M10 20H29M10 25.500H27" />
              <g fill={ICON} stroke="none" fontSize="16" fontFamily="Lato, sans-serif" textAnchor="middle">
                <text x="4.500" y="12.500">1</text>
                <text x="4.500" y="28.500">2</text>
              </g>
            </svg>
            <Button className="ml-[200px] !h-[39px] w-[128px] !leading-[34px]">选项</Button>
          </div>
        </Section>

        <div className="pl-[20px] pt-[7px]">
          <SectionTitle>快速操作</SectionTitle>
          <div className="mt-[16px] grid w-[432px] grid-cols-2 gap-5">
            <Button>更改大小写</Button>
            <Button>新建超链接</Button>
            <Button>插入脚注</Button>
            <Button>插入尾注</Button>
            <Button className="col-span-2">用占位符文本填充</Button>
          </div>
        </div>
      </div>
      <div className="h-[1301px] w-[24px] bg-[#48494b] pt-[4px]">
        <div className="ml-[2px] h-[1260px] w-[20px] rounded-full bg-[#68696b]" />
      </div>
    </div>
  </div>
);

/* ---------- app chrome ---------- */

const MenuBar = () => (
  <div className="relative flex h-[44px] items-center border-b border-[#6d9bb3] bg-gradient-to-r from-[#cbe2ec] to-[#d3e7ee] text-[#17303b]">
    <svg className="ml-[41px] -mt-[6px]" width="26" height="32" viewBox="0 0 26 32" fill="#17303b">
      <path d="M18 0Q18.500 3 16.500 5.500Q14.500 8 12 7.800Q11.800 5 13.500 2.800Q15.500 0.500 18 0Z" />
      <path d="M24.500 11.500Q21 13.500 21 17.500Q21.200 22 25.500 23.700Q24 28 21.500 30.500Q19.500 32 17 31Q13.500 29.500 10.500 31Q8 32 6 30.500Q1 25 0.500 18Q0.500 10 7 8.500Q9 8.200 13 9.800Q15.500 8.700 18 8.300Q22.500 8.500 24.500 11.500Z" />
    </svg>
    <span className="ml-[39px] mt-px w-[155px] font-['Inter',sans-serif] text-[27px] font-bold tracking-[0.450px] leading-[30px]">InDesign</span>
    <div className="mt-px flex gap-[36.400px] text-[28px] leading-[30px]">
      {MENUS.map((m) => (
        <span key={m}>{m}</span>
      ))}
    </div>
    {/* site mark laid over the menus */}
    <div className="absolute left-[792px] top-0 z-10 flex h-[54px] items-center">
      <span className="flex h-[35px] w-[35px] items-center justify-center rounded-full bg-[#f3f3f3]/90">
        <svg width="17" height="20" viewBox="0 0 17 20" fill="none">
          <path d="M1 2.500H15M2 17.500H16" stroke="#f9a58b" strokeWidth="4" />
          <path d="M15 1L2.500 19" stroke="#ff4713" strokeWidth="4.500" />
        </svg>
      </span>
      <span className="ml-[14px] -mt-[2px] font-['Noto_Sans_CJK_SC',sans-serif] text-[38px] font-medium leading-none tracking-[0.350px] text-white/90 [text-shadow:0_1px_4px_rgba(70,90,100,0.55)]">
        www.MacZ.com
      </span>
    </div>
  </div>
);

const TitleBar = () => (
  <div className="flex h-[73px] items-center rounded-t-[12px] border-2 border-[#38393b] bg-[#525355] pb-[2px]">
    <div className="ml-[16px] -mt-px flex gap-4">
      <span className="flex h-[23px] w-[23px] items-center justify-center rounded-full bg-[#fb5b55]">
        <span className="h-[8px] w-[8px] rounded-full bg-[#4c0303]" />
      </span>
      <span className="h-[23px] w-[23px] rounded-full bg-[#fdbd3e]" />
      <span className="h-[23px] w-[23px] rounded-full bg-[#29cd4a]" />
    </div>
    <svg className="ml-[36px] mt-px" width="35" height="30" viewBox="0 0 35 30" fill="#c6c7c9">
      <path d="M17.500 0L35 16.500L33.500 19H31.500V30H21.500V20Q21.500 18.500 20 18.500H15.500Q14 18.500 14 20V30H4V19H1.500L0 16.500Z" />
    </svg>
    <span className="ml-[383px] -mt-[14px] w-[758px] text-[26px] tracking-[0.620px] text-[#f0f0f0]">Adobe InDesign 2021</span>
    <svg className="-mt-px" width="32" height="34" viewBox="0 0 32 34" fill="none" stroke="#c6c7c9">
      <path d="M9 12.500H2V32H30V12.500H23" strokeWidth="3.500" />
      <path d="M16 5V20" strokeWidth="3.600" />
      <path d="M7.500 8.500L16 0L24.500 8.500Z" fill="#c6c7c9" stroke="none" />
    </svg>
    <span className="ml-[25px] h-[40px] w-[3px] bg-[#606163]" />
    <span className="ml-[24px] text-[21.600px] text-[#f0f0f0]">基本功能</span>
    <span className="ml-[19px] mt-[5px]">
      <svg width="16" height="11" viewBox="0 0 16 11" fill="none" stroke="#e8e8e8" strokeWidth="2.600">
        <path d="M1.500 1.500L8 8.500L14.500 1.500" />
      </svg>
    </span>
    <span className="ml-[29px] h-[40px] w-[3px] bg-[#606163]" />
    <span className="ml-[10px] mt-[2px] h-[41px] w-[333px] rounded-[5px] border-2 border-[#6b6c6e] bg-[#444547]" />
  </div>
);

const App = () => (
  <div className="flex h-[1527px] w-[1920px] flex-col overflow-hidden bg-[#4e7d96] font-['Lato','Noto_Sans_CJK_SC',sans-serif]">
    <div className="bg-[#4e7d96] pb-px">
      <MenuBar />
    </div>
    <TitleBar />
    <div className="relative flex h-[1409px] border-b-2 border-[#333436] bg-[#4a4b4d]">
      <Toolbar />
      <Document />
      <Properties />
      <div className="absolute left-[440px] top-[1285px] whitespace-nowrap text-[47.200px] font-bold leading-[70px] text-[#ff5546] [-webkit-text-stroke:14px_white] [paint-order:stroke_fill] [stroke-linejoin:round] drop-shadow-[2px_5px_3px_rgba(0,0,0,0.6)]">
        会看到一个重新定义的样式图标
      </div>
    </div>
  </div>
);

export default App;
